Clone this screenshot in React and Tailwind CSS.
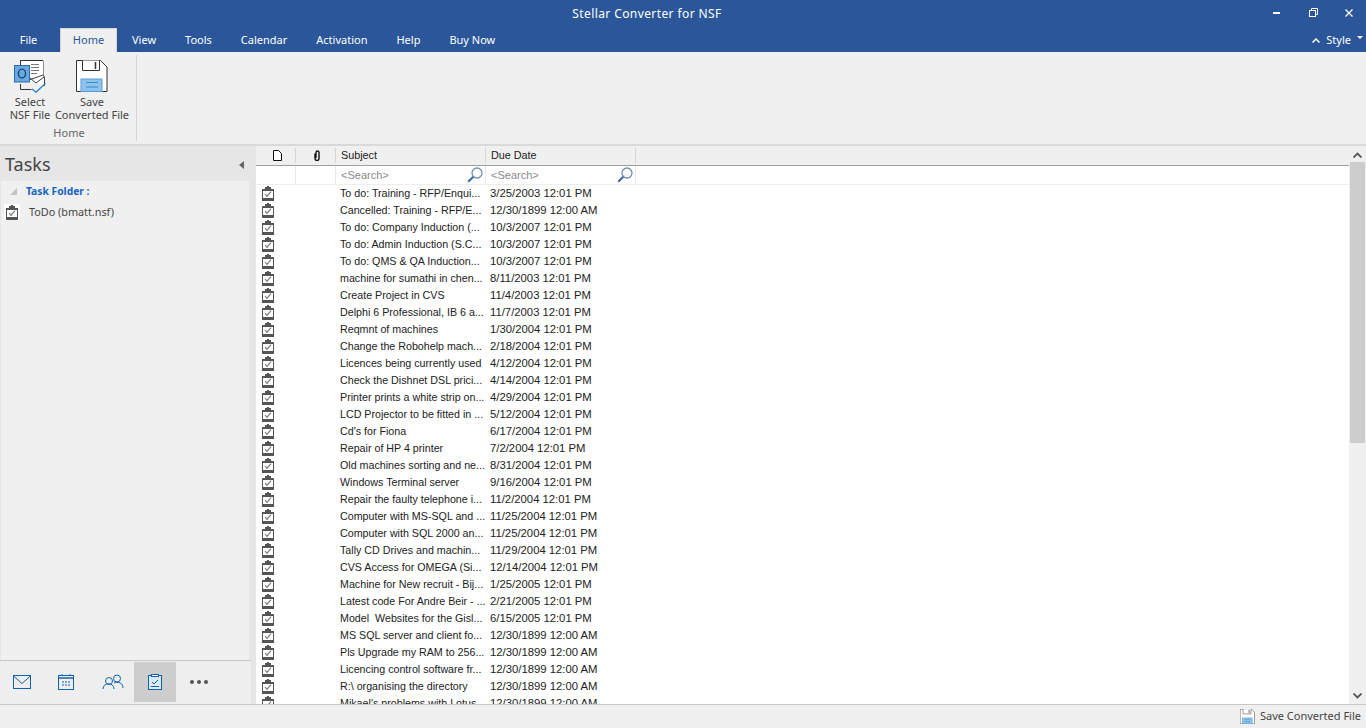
import React from "react";

const TABS = ["View", "Tools", "Calendar", "Activation", "Help", "Buy Now"];

const ROWS = [
  ["To do: Training - RFP/Enqui...", "3/25/2003 12:01 PM"],
  ["Cancelled: Training - RFP/E...", "12/30/1899 12:00 AM"],
  ["To do: Company Induction (...", "10/3/2007 12:01 PM"],
  ["To do: Admin Induction (S.C...", "10/3/2007 12:01 PM"],
  ["To do: QMS & QA Induction...", "10/3/2007 12:01 PM"],
  ["machine for sumathi in chen...", "8/11/2003 12:01 PM"],
  ["Create Project in CVS", "11/4/2003 12:01 PM"],
  ["Delphi 6 Professional, IB 6 a...", "11/7/2003 12:01 PM"],
  ["Reqmnt of machines", "1/30/2004 12:01 PM"],
  ["Change the Robohelp mach...", "2/18/2004 12:01 PM"],
  ["Licences being currently used", "4/12/2004 12:01 PM"],
  ["Check the Dishnet DSL prici...", "4/14/2004 12:01 PM"],
  ["Printer prints a white strip on...", "4/29/2004 12:01 PM"],
  ["LCD Projector to be fitted in ...", "5/12/2004 12:01 PM"],
  ["Cd's for Fiona", "6/17/2004 12:01 PM"],
  ["Repair of HP 4 printer", "7/2/2004 12:01 PM"],
  ["Old machines sorting and ne...", "8/31/2004 12:01 PM"],
  ["Windows Terminal server", "9/16/2004 12:01 PM"],
  ["Repair the faulty telephone i...", "11/2/2004 12:01 PM"],
  ["Computer with MS-SQL and ...", "11/25/2004 12:01 PM"],
  ["Computer with SQL 2000 an...", "11/25/2004 12:01 PM"],
  ["Tally CD Drives and machin...", "11/29/2004 12:01 PM"],
  ["CVS Access for OMEGA (Si...", "12/14/2004 12:01 PM"],
  ["Machine for New recruit - Bij...", "1/25/2005 12:01 PM"],
  ["Latest code For Andre Beir - ...", "2/21/2005 12:01 PM"],
  ["Model  Websites for the Gisl...", "6/15/2005 12:01 PM"],
  ["MS SQL server and client fo...", "12/30/1899 12:00 AM"],
  ["Pls Upgrade my RAM to 256...", "12/30/1899 12:00 AM"],
  ["Licencing control software fr...", "12/30/1899 12:00 AM"],
  ["R:\\ organising the directory", "12/30/1899 12:00 AM"],
  ["Mikael's problems with Lotus...", "12/30/1899 12:00 AM"],
];

function TaskIcon() {
  return (
    <svg width="12" height="15" viewBox="0 0 12 15" className="block" shapeRendering="crispEdges">
      <path d="M0 3h3V1h2V0h2v1h2v2h3v12H0z" fill="#555" />
      <rect x="1" y="5" width="10" height="7" fill="#fff" />
      <path d="M3 8l2 2.4L9 5.6" fill="none" stroke="#777" strokeWidth="1.1" shapeRendering="auto" />
    </svg>
  );
}

function SearchBox() {
  return (
    <div className="flex items-center justify-between border-r border-[#e8e8e8] pl-[5px] pr-[2px] text-[11px] text-[#8a8a8a]">
      <span>&lt;Search&gt;</span>
      <svg width="16" height="16" viewBox="0 0 16 16">
        <circle cx="10" cy="6" r="5" fill="none" stroke="#6f8fb5" strokeWidth="1.3" />
        <path d="M6.3 9.7L1.2 14.8" stroke="#3f6ea5" strokeWidth="2.2" />
      </svg>
    </div>
  );
}

function OutlookIcon() {
  return (
    <svg width="33" height="33" viewBox="0 0 33 33">
      <path d="M6.5 24v5.5h11" fill="none" stroke="#333" />
      <path d="M6.5 5V0.5h22.5v19" fill="#fff" stroke="#333" />
      <rect x="7" y="1" width="22" height="20" fill="#fff" />
      <path d="M6.5 5V0.5h22.5" fill="none" stroke="#333" />
      <path d="M17 4.5h8M17 7.5h8M17 10.5h8M17 13.5h6" stroke="#777" />
      <path d="M15 20l14-5 1.5 2v9" fill="#fff" stroke="#444" />
      <path d="M15 17l7 6 8-6" fill="none" stroke="#444" />
      <rect x="0.5" y="5.5" width="15" height="16.5" fill="#6aa9dd" stroke="#2a6cab" />
      <ellipse cx="8" cy="13.5" rx="3.6" ry="4.4" fill="none" stroke="#12457e" strokeWidth="1.4" />
      <path d="M18 29l4 3.3 9.5-9" fill="none" stroke="#2f7fc8" strokeWidth="1.3" />
    </svg>
  );
}

function SaveIcon({ size = 32 }) {
  return (
    <svg width={size} height={size} viewBox="0 0 32 32">
      <path d="M0.5 0.5h24l6.5 6.5v24.5H0.5z" fill="#fff" stroke="#333" />
      <path d="M6.5 0.5v10h17v-10" fill="#fff" stroke="#333" />
      <path d="M19.5 2v7" stroke="#333" strokeWidth="1.5" />
      <rect x="5" y="19" width="21" height="12.5" fill="#8cc3ec" stroke="#5b9bd5" />
      <path d="M10 22.5h12M10 27h12" stroke="#3f86c7" strokeWidth="1" />
    </svg>
  );
}

function NavIcons() {
  const stroke = "#0f62ad";
  return (
    <div className="flex h-[44px] items-start border-t border-[#c8c8c8] bg-[#eeeeee] pt-px">
      <div className="flex h-[40px] w-[44px] items-center justify-center">
        <svg width="18" height="14" viewBox="0 0 18 14">
          <rect x="0.5" y="0.5" width="17" height="13" fill="none" stroke={stroke} />
          <path d="M0.5 1L9 8.5 17.5 1" fill="none" stroke={stroke} />
        </svg>
      </div>
      <div className="flex h-[40px] w-[44px] items-center justify-center">
        <svg width="16" height="16" viewBox="0 0 16 16">
          <rect x="0.5" y="1.5" width="15" height="14" fill="none" stroke={stroke} />
          <path d="M1 4h14" stroke={stroke} strokeWidth="1.5" />
          <path d="M4 0v2M12 0v2" stroke={stroke} />
          <path d="M4 8h2M7 8h2M10 8h2M4 11h2M7 11h2M10 11h2" stroke={stroke} />
        </svg>
      </div>
      <div className="flex h-[40px] w-[46px] items-center justify-center pl-[3px]">
        <svg width="22" height="16" viewBox="0 0 22 16">
          <circle cx="7" cy="7" r="3.5" fill="none" stroke={stroke} />
          <path d="M1 15c0-7 11-7 11 0" fill="none" stroke={stroke} />
          <circle cx="15" cy="4.5" r="3.5" fill="none" stroke={stroke} />
          <path d="M12 9c4-2 9 0 9 5" fill="none" stroke={stroke} />
        </svg>
      </div>
      <div className="flex h-[40px] w-[42px] items-center justify-center bg-[#cdcdcd]">
        <svg width="14" height="16" viewBox="0 0 14 16">
          <rect x="0.5" y="1.5" width="13" height="14" fill="#d9e8f5" stroke={stroke} />
          <rect x="3.5" y="0.5" width="7" height="2" fill="#fff" stroke={stroke} />
          <path d="M4 8l2 2 4-4" fill="none" stroke={stroke} />
          <path d="M3 12.5h8" stroke={stroke} />
        </svg>
      </div>
      <div className="flex h-[40px] w-[46px] items-center justify-center gap-[3px]">
        <span className="size-[4px] rounded-full bg-[#555]"></span>
        <span className="size-[4px] rounded-full bg-[#555]"></span>
        <span className="size-[4px] rounded-full bg-[#555]"></span>
      </div>
    </div>
  );
}

export default function App() {
  return (
    <div className="flex h-[728px] w-[1366px] flex-col overflow-hidden bg-[#f0f0f0] font-['Liberation_Sans',sans-serif] text-[11.3px]">
      {/* title + tabs */}
      <div className="h-[52px] shrink-0 bg-[#2b579a] font-['Noto_Sans',sans-serif] text-white">
        <div className="relative flex h-[28px] items-center justify-center pr-[72px] text-[12px] tracking-[0.4px]">
          <span>Stellar Converter for NSF</span>
          <div className="absolute right-0 top-0 flex h-[25px] items-center">
            <div className="flex w-[40px] justify-center"><span className="mt-[1px] h-[2px] w-[7px] bg-white"></span></div>
            <div className="flex w-[35px] justify-center">
              <svg width="9" height="9" viewBox="0 0 9 9">
                <rect x="0.5" y="2.5" width="6" height="6" fill="none" stroke="#fff" />
                <path d="M2.5 2V0.5h6v6H7" fill="none" stroke="#fff" />
              </svg>
            </div>
            <div className="flex w-[35px] justify-center">
              <svg width="8" height="8" viewBox="0 0 8 8"><path d="M0.5 0.5l7 7M7.5 0.5l-7 7" stroke="#fff" strokeWidth="1.3" /></svg>
            </div>
          </div>
        </div>
        <div className="flex h-[24px] items-center text-[11px]">
          <div className="flex w-[60px] justify-center pr-[3px]">File</div>
          <div className="flex h-[24px] w-[57px] items-center justify-center border border-b-0 border-[#d5d5d5] bg-[#f0f0f0] text-[#2b579a]">Home</div>
          <div className="ml-[15px] flex gap-[29px]">
            {TABS.map(t => <span key={t}>{t}</span>)}
          </div>
          <div className="ml-auto flex items-center pr-[3px]">
            <svg width="8" height="5" viewBox="0 0 8 5"><path d="M0.5 4.5L4 1l3.5 3.5" fill="none" stroke="#fff" strokeWidth="1.5" /></svg>
            <span className="ml-[6px]">Style</span>
            <svg width="6" height="3" viewBox="0 0 6 3" className="mb-[6px] ml-[6px]"><path d="M0 0h6L3 3z" fill="#fff" /></svg>
          </div>
        </div>
      </div>

      {/* ribbon */}
      <div className="flex h-[94px] shrink-0 border-b-2 border-[#d9d9d9] bg-[#f0f0f0] font-['Noto_Sans',sans-serif] text-[11px] leading-[13px] text-[#444]">
        <div className="my-[3px] flex w-[137px] flex-col border-r border-[#d5d5d5]">
          <div className="flex h-[69px] pl-[9px]">
            <div className="flex w-[42px] flex-col items-center">
              <div className="h-[38px] pt-[5px]"><OutlookIcon /></div>
              <span className="mt-[2px] whitespace-nowrap text-center">Select<br />NSF File</span>
            </div>
            <div className="ml-[3px] flex w-[76px] flex-col items-center">
              <div className="h-[38px] pt-[5px]"><SaveIcon /></div>
              <span className="mt-[2px] whitespace-nowrap text-center">Save<br />Converted File</span>
            </div>
          </div>
          <div className="pl-[2px] pt-[2px] text-center text-[#666]">Home</div>
        </div>
      </div>

      <div className="flex min-h-0 flex-1">
        {/* left pane */}
        <div className="flex w-[251px] shrink-0 flex-col bg-[#e6e6e6]">
          <div className="flex h-[35px] shrink-0 items-center justify-between pl-[5px] pr-[7px] pt-[2px] font-['Noto_Sans',sans-serif] text-[18px] text-[#444]">
            <span>Tasks</span>
            <svg width="5" height="8" viewBox="0 0 5 8"><path d="M5 0v8L0 4z" fill="#666" /></svg>
          </div>
          <div className="ml-px mr-[2px] min-h-0 flex-1 bg-[#f0f0f0] font-['Noto_Sans',sans-serif] text-[10.8px] text-[#444]">
            <div className="flex h-[21px] items-center pl-[9px]">
              <svg width="7" height="7" viewBox="0 0 7 7"><path d="M7 0v7H0z" fill="#c4c4c4" /></svg>
              <span className="ml-[9px] text-[10.3px] font-bold text-[#1565c0]">Task Folder :</span>
            </div>
            <div className="flex h-[20px] items-center pl-[3px]">
              <div className="flex size-[16px] items-center justify-center bg-white"><TaskIcon /></div>
              <span className="ml-[9px]">ToDo (bmatt.nsf)</span>
            </div>
          </div>
          <NavIcons />
        </div>

        <div className="w-[5px] shrink-0 bg-[#e6e6e6]"></div>

        {/* grid */}
        <div className="min-w-0 flex-1 bg-white text-[#222]">
          <div className="grid h-[20px] grid-cols-[40px_40px_150px_150px_1fr] border-b border-[#a0a0a0] bg-[#f0f0f0] text-[10.8px]">
            <div className="my-[2px] flex items-center justify-center border-r border-[#d5d5d5] pl-[4px]">
              <svg width="9" height="11" viewBox="0 0 9 11"><path d="M0.5 0.5h5l3 3v7h-8z" fill="#fff" stroke="#111" /></svg>
            </div>
            <div className="my-[2px] flex items-center justify-center border-r border-[#d5d5d5] pl-[3px]">
              <svg width="8" height="11" viewBox="0 0 8 11"><path d="M2 3.5v5a2 2 0 0 0 4 0V2.5a1.5 1.5 0 0 0-3 0V8" fill="none" stroke="#111" strokeWidth="1.4" /></svg>
            </div>
            <div className="my-[2px] border-r border-[#d5d5d5] pl-[5px] leading-[15px]">Subject</div>
            <div className="my-[2px] border-r border-[#d5d5d5] pl-[5px] leading-[15px]">Due Date</div>
            <div></div>
          </div>
          <div className="grid h-[19px] grid-cols-[40px_40px_150px_150px_1fr] border-b border-[#eeeeee] leading-[18px]">
            <div className="border-r border-[#e8e8e8]"></div>
            <div className="border-r border-[#e8e8e8]"></div>
            <SearchBox />
            <SearchBox />
            <div></div>
          </div>
          <div>
            {ROWS.map((r, i) => (
              <div key={i} className="grid h-[17px] grid-cols-[84px_150px_1fr] items-center">
                <div className="pl-[6px]"><TaskIcon /></div>
                <div className="whitespace-pre text-[10.7px]">{r[0]}</div>
                <div className="whitespace-nowrap">{r[1]}</div>
              </div>
            ))}
          </div>
        </div>

        {/* scrollbar */}
        <div className="flex w-[17px] shrink-0 flex-col items-center bg-[#f0f0f0] pt-px">
          <div className="flex h-[15px] w-[15px] items-center justify-center">
            <svg width="9" height="6" viewBox="0 0 9 6"><path d="M0.5 5.5l4-4 4 4" fill="none" stroke="#555" strokeWidth="1.8" /></svg>
          </div>
          <div className="h-[281px] w-[15px] bg-[#cdcdcd]"></div>
          <div className="mt-auto flex h-[16px] w-[15px] items-center justify-center">
            <svg width="9" height="6" viewBox="0 0 9 6"><path d="M0.5 0.5l4 4 4-4" fill="none" stroke="#555" strokeWidth="1.8" /></svg>
          </div>
        </div>
      </div>

      {/* status bar */}
      <div className="flex h-[24px] shrink-0 items-center justify-end border-t border-[#c8c8c8] bg-[#f0f0f0] pr-[5px] font-['Noto_Sans',sans-serif] text-[11px] text-[#444]">
        <SaveIcon size={15} />
        <span className="ml-[5px]">Save Converted File</span>
      </div>
    </div>
  );
}
